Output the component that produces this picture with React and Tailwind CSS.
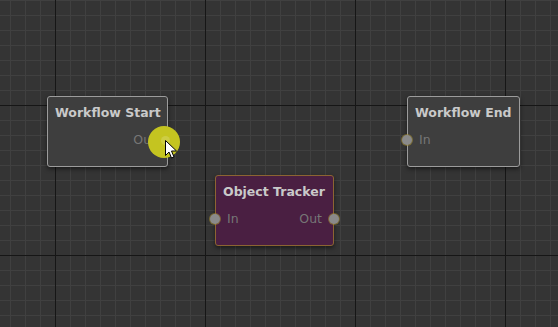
import React from "react"

const font = { fontFamily: "'DejaVu Sans', Verdana, sans-serif" }

function Grid() {
  return (
    <svg className="absolute inset-0" width="558" height="327">
      <defs>
        <pattern id="minor" x="10" y="0" width="15" height="15" patternUnits="userSpaceOnUse">
          <rect width="15" height="15" fill="#343434" />
          <rect width="1" height="15" fill="#404040" />
          <rect width="15" height="1" fill="#404040" />
        </pattern>
      </defs>
      <rect width="558" height="327" fill="url(#minor)" />
      {[55, 205, 355, 505].map((x) => (
        <rect key={x} x={x} y="0" width="1" height="327" fill="#161616" />
      ))}
      {[105, 255].map((y) => (
        <rect key={y} x="0" y={y} width="558" height="1" fill="#161616" />
      ))}
    </svg>
  )
}

function Port({ className }) {
  return (
    <div
      className={`absolute top-1/2 -translate-y-1/2 w-[10px] h-[10px] rounded-full bg-[#8a8a8a] ${className}`}
    />
  )
}

function Node({ title, left, top, width, purple, inPort, outPort }) {
  const box = purple
    ? "bg-[#4a1f42] border-[#8c6432]"
    : "bg-[#3e3e3e] border-[#9c9c9c]"
  return (
    <div
      className={`absolute h-[71px] rounded-[3px] border shadow-[0_2px_4px_rgba(0,0,0,0.5)] ${box}`}
      style={{ left, top, width }}
    >
      <div className="px-[7px] pt-[6px] whitespace-nowrap text-[12.5px] font-bold text-[#c9c9c9] leading-[20px]">
        {title}
      </div>
      <div className="relative mt-[7px] h-[20px] flex items-center justify-between px-[11px] text-[12.5px] text-[#767676]">
        <span>{inPort ? "In" : ""}</span>
        <span>{outPort ? "Out" : ""}</span>
        {inPort && <Port className="left-[-6px] ring-1 ring-[#a08a30]/60" />}
        {outPort && <Port className="right-[-6px] ring-1 ring-[#a08a30]/60" />}
      </div>
    </div>
  )
}

function Cursor() {
  return (
    <div className="absolute left-[148px] top-[126px] w-[32px] h-[32px]">
      <div className="absolute inset-0 rounded-full bg-[#c4c420]" />
      <div className="absolute left-[13px] top-[10px] w-[9px] h-[9px] rounded-full bg-[#cdcd44]" />
      <svg className="absolute left-[17px] top-[14px]" width="13" height="20" viewBox="0 0 13 20">
        <path d="M0.5 0.5 L0.5 15.5 L4 12 L6.5 18 L9 17 L6.5 11 L11.5 11 Z" fill="#fff" stroke="#000" strokeWidth="1" />
      </svg>
    </div>
  )
}

export default function App() {
  return (
    <div className="relative w-[558px] h-[327px] overflow-hidden bg-[#343434]" style={font}>
      <Grid />
      <Node title="Workflow Start" left={47} top={96} width={121} outPort />
      <Node title="Object Tracker" left={215} top={175} width={119} purple inPort outPort />
      <Node title="Workflow End" left={407} top={96} width={113} inPort />
      <Cursor />
    </div>
  )
}
